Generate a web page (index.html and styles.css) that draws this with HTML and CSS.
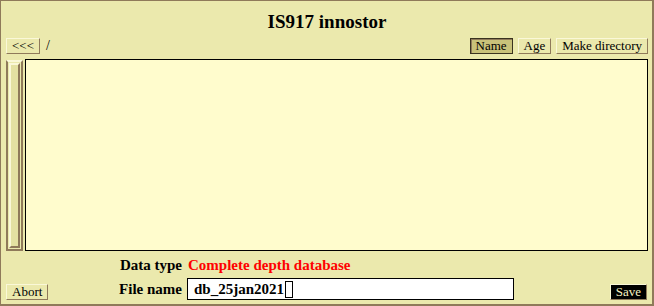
FILE: index.html
```html
<!DOCTYPE html>
<html lang="en">
<head>
    <meta charset="UTF-8">
    <title>IS917 innostor</title>
    <link rel="stylesheet" href="styles.css">
</head>
<body>
    <div class="window">
        <h1 class="title">IS917 innostor</h1>

        <div class="toolbar">
            <button class="btn">&lt;&lt;&lt;</button>
            <span class="path">/</span>
            <div class="spacer"></div>
            <button class="btn pressed">Name</button>
            <button class="btn">Age</button>
            <button class="btn">Make directory</button>
        </div>

        <div class="browser">
            <div class="scrollbar"><div class="thumb"></div></div>
            <div class="listing"></div>
        </div>

        <div class="form">
            <div class="row">
                <div class="label">Data type</div>
                <div class="value">Complete depth database</div>
            </div>
            <div class="row">
                <div class="label"><button class="btn">Abort</button><span>File name</span></div>
                <div class="field">db_25jan2021<span class="cursor"></span></div>
                <div class="spacer"></div>
                <button class="btn dark">Save</button>
            </div>
        </div>
    </div>
</body>
</html>
```

FILE: styles.css
```css
* {
    margin: 0;
    padding: 0;
    box-sizing: border-box;
}

body {
    font-family: "Liberation Serif", "Times New Roman", serif;
    background: #ebe9ad;
    color: #000;
}

.window {
    width: 654px;
    height: 306px;
    border: 1px solid #8f7a5a;
    border-right-width: 2px;
    border-bottom-width: 2px;
    background: #ebe9ad;
    padding: 0 4px 0 5px;
}

.title {
    text-align: center;
    font-size: 19px;
    font-weight: bold;
    height: 37px;
    padding-top: 10px;
    line-height: 22px;
}

.toolbar {
    display: flex;
    align-items: center;
    gap: 5px;
    height: 15px;
}

.spacer {
    flex: 1;
}

.path {
    font-size: 14px;
    padding-left: 1px;
}

.btn {
    font-family: "Liberation Serif", "Times New Roman", serif;
    font-size: 13px;
    line-height: 13px;
    height: 16px;
    padding: 0 5px;
    background: #ebe9ad;
    color: #000;
    border: 1px solid;
    border-color: #faf8d8 #8f7a5a #8f7a5a #faf8d8;
}

.btn.pressed {
    background: #c9c27a;
    border: 1px solid #3a3320;
    box-shadow: inset 1px 1px 0 #8f7a5a;
}

.btn.dark {
    background: #000;
    color: #f5f2c0;
    border-color: #faf8d8 #8f7a5a #8f7a5a #faf8d8;
}

.browser {
    display: flex;
    gap: 2px;
    height: 192px;
    margin-top: 6px;
}

.scrollbar {
    width: 17px;
    margin-top: 1px;
    height: 191px;
    border: 2px solid #8f7a5a;
    border-top-color: #faf8d8;
    border-left-color: #8f7a5a;
    background: #ebe9ad;
    padding: 1px;
}

.thumb {
    height: 100%;
    border: 2px solid;
    border-color: #faf8d8 #8f7a5a #8f7a5a #faf8d8;
    background: #e4e1a2;
}

.listing {
    flex: 1;
    border: 1px solid #000;
    background: #fffccd;
}

.form {
    display: flex;
    flex-direction: column;
    gap: 3px;
    margin-top: 4px;
}

.row {
    display: flex;
    align-items: center;
    gap: 6px;
}

.label {
    width: 176px;
    display: flex;
    justify-content: flex-end;
    align-items: center;
    font-size: 15px;
    font-weight: bold;
    line-height: 20px;
}

.label .btn {
    margin-right: auto;
    margin-top: 5px;
    font-weight: normal;
}

.value {
    color: #ff0000;
    font-size: 15px;
    font-weight: bold;
    line-height: 20px;
}

.field {
    width: 327px;
    height: 22px;
    margin-left: -1px;
    border: 1px solid #000;
    background: #fff;
    font-size: 15px;
    font-weight: bold;
    line-height: 20px;
    padding-left: 6px;
    display: flex;
    align-items: center;
}

.cursor {
    display: inline-block;
    width: 8px;
    height: 17px;
    border: 1px solid #000;
    margin-left: 1px;
}

.row .btn.dark {
    margin-top: 5px;
    margin-right: 1px;
}
```
